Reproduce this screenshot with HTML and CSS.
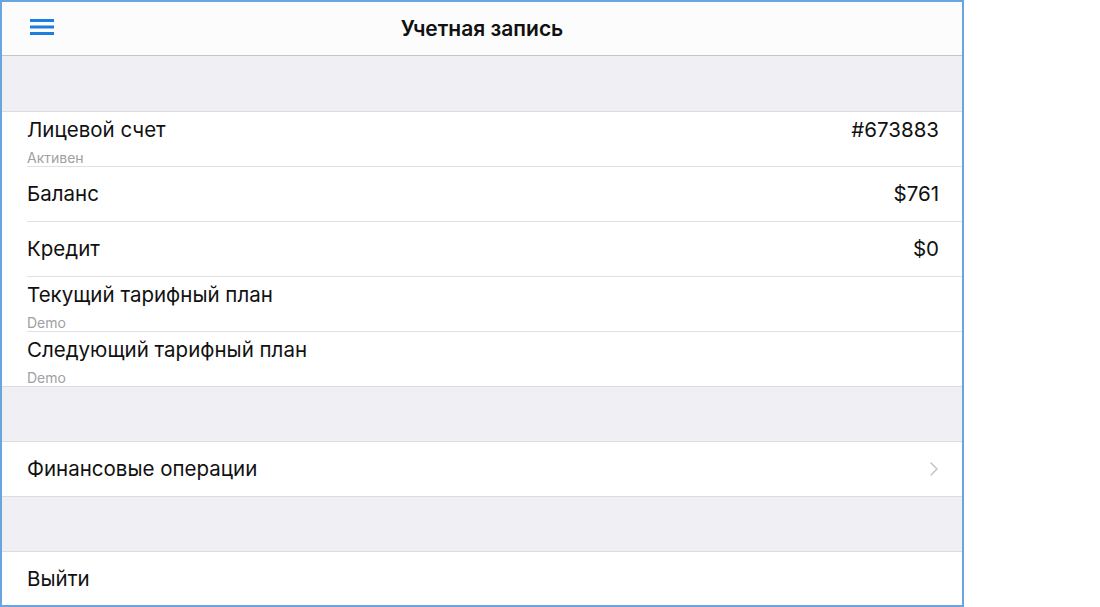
FILE: index.html
```html
<!DOCTYPE html>
<html lang="ru">

<head>
  <meta charset="UTF-8" />
  <meta name="viewport" content="width=device-width, initial-scale=1.0" />
  <title>Учетная запись</title>
  <link rel="stylesheet" href="styles.css">
</head>

<body>

  <div class="frame">
    <div class="header">
      <div class="menu-btn">
        <svg width="24" height="16" viewBox="0 0 24 16">
          <rect x="0" y="0" width="24" height="3" fill="#1a7fe0" />
          <rect x="0" y="6.5" width="24" height="3" fill="#1a7fe0" />
          <rect x="0" y="13" width="24" height="3" fill="#1a7fe0" />
        </svg>
      </div>
      <div class="title">Учетная запись</div>
    </div>

    <div class="gap first"></div>

    <ul class="group">
      <li class="row two">
        <div class="label">
          <div class="main-text">Лицевой счет</div>
          <div class="sub-text">Активен</div>
        </div>
        <div class="value">#673883</div>
      </li>
      <li class="row">
        <div class="label"><div class="main-text">Баланс</div></div>
        <div class="value">$761</div>
      </li>
      <li class="row">
        <div class="label"><div class="main-text">Кредит</div></div>
        <div class="value">$0</div>
      </li>
      <li class="row two">
        <div class="label">
          <div class="main-text">Текущий тарифный план</div>
          <div class="sub-text">Demo</div>
        </div>
      </li>
      <li class="row two">
        <div class="label">
          <div class="main-text">Следующий тарифный план</div>
          <div class="sub-text">Demo</div>
        </div>
      </li>
    </ul>

    <div class="gap"></div>

    <ul class="group">
      <li class="row">
        <div class="label"><div class="main-text">Финансовые операции</div></div>
        <svg class="chevron" width="10" height="16" viewBox="0 0 10 16">
          <path d="M1.5 1.5 L8 8 L1.5 14.5" fill="none" stroke="#c7c7cc" stroke-width="1.6" />
        </svg>
      </li>
    </ul>

    <div class="gap"></div>

    <ul class="group">
      <li class="row">
        <div class="label"><div class="main-text">Выйти</div></div>
      </li>
    </ul>
  </div>

</body>

</html>
```

FILE: styles.css
```css
* {
  margin: 0;
  padding: 0;
  box-sizing: border-box;
}

body {
  font-family: Inter, 'Noto Sans', sans-serif;
  background: #fff;
  color: #111;
  width: 1100px;
  height: 607px;
  overflow: hidden;
}

/* Рамка приложения */
.frame {
  width: 964px;
  height: 607px;
  border: 2px solid #6aa5e0;
  background: #efeff4;
  display: flex;
  flex-direction: column;
  overflow: hidden;
}

.header {
  height: 54px;
  flex-shrink: 0;
  background: #fcfcfc;
  border-bottom: 1px solid #c6c6c9;
  display: flex;
  align-items: center;
  justify-content: center;
  position: relative;
}

.menu-btn {
  position: absolute;
  left: 28px;
  top: 17px;
  height: 16px;
}

.menu-btn svg {
  display: block;
}

.title {
  font-size: 21px;
  font-weight: 600;
  color: #111;
}

.gap {
  height: 55px;
  flex-shrink: 0;
  border-bottom: 1px solid #dcdce0;
}

.gap.first {
  height: 56px;
}

.group {
  list-style: none;
  background: #fff;
  padding-left: 25px;
  border-bottom: 1px solid #dcdce0;
}

.row {
  height: 55px;
  display: flex;
  align-items: center;
  justify-content: space-between;
  padding-right: 23px;
  border-bottom: 1px solid #e0e0e3;
}

.row:last-child {
  border-bottom: none;
  height: 54px;
}

.row.two {
  align-items: flex-start;
  padding-top: 6px;
}

.label {
  display: flex;
  flex-direction: column;
}

.main-text {
  font-size: 20.5px;
  line-height: 24px;
}

.sub-text {
  font-size: 14px;
  line-height: 16px;
  color: #a0a0a4;
  margin-top: 8px;
}

.value {
  font-size: 20.5px;
  line-height: 24px;
  color: #111;
}

.chevron {
  display: block;
}
```
